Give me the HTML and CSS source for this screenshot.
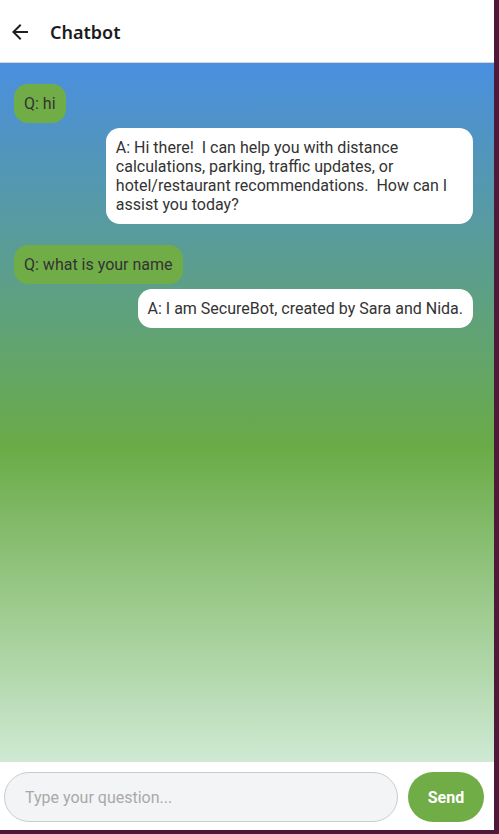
FILE: index.html
```html
<!DOCTYPE html>
<html>
<head>
<meta charset="utf-8">
<link rel="stylesheet" href="styles.css">
</head>
<body>
<div class="app">
  <header class="header">
    <svg class="back" width="24" height="24" viewBox="0 0 24 24"><path d="M20 11H7.83l5.59-5.59L12 4l-8 8 8 8 1.41-1.41L7.83 13H20v-2z" fill="#1f1f1f"/></svg>
    <h1 class="title">Chatbot</h1>
  </header>
  <main class="chat">
    <div class="msg q">Q: hi</div>
    <div class="msg a">A: Hi there!  I can help you with distance calculations, parking, traffic updates, or hotel/restaurant recommendations.  How can I assist you today?</div>
    <div class="msg q">Q: what is your name</div>
    <div class="msg a">A: I am SecureBot, created by Sara and Nida.</div>
  </main>
  <footer class="composer">
    <input class="input" type="text" placeholder="Type your question...">
    <button class="send">Send</button>
  </footer>
</div>
</body>
</html>
```
FILE: styles.css
```css
* { box-sizing: border-box; }
html, body { margin: 0; padding: 0; }
body {
  background: #4e1a3a;
  width: 499px;
  height: 834px;
  overflow: hidden;
  font-family: Roboto, "Liberation Sans", sans-serif;
}
.app {
  width: 494px;
  height: 830px;
  display: flex;
  flex-direction: column;
  background: #fff;
}
.header {
  height: 63px;
  flex: none;
  display: flex;
  align-items: center;
  gap: 18px;
  padding: 1px 0 0 8px;
  background: #fff;
  border-bottom: 1px solid #d6d6d6;
}
.back { display: block; }
.title {
  margin: 0;
  font-family: "Noto Sans", sans-serif;
  font-weight: 600;
  font-size: 18px;
  color: #1c1c1c;
}
.chat {
  flex: 1;
  display: flex;
  flex-direction: column;
  align-items: flex-start;
  padding: 21px 21px 16px 14px;
  background: linear-gradient(180deg, #4a8fe0 0%, #6aab47 55%, #cfe9d3 100%);
}
.msg {
  max-width: 80%;
  padding: 10px;
  border-radius: 14px;
  font-size: 16px;
  line-height: 19px;
  color: #333;
  white-space: pre-wrap;
}
.q {
  background: #70ad47;
  margin-bottom: 5px;
}
.a {
  background: #fff;
  align-self: flex-end;
  margin-bottom: 21px;
}
.composer {
  flex: none;
  height: 68px;
  display: flex;
  align-items: flex-start;
  gap: 10px;
  padding: 10px 10px 0 4px;
  background: #fff;
}
.input {
  flex: 1;
  height: 50px;
  border: 1px solid #cbcbcb;
  border-radius: 25px;
  background: #f3f4f6;
  padding: 0 20px;
  font-family: Roboto, sans-serif;
  font-size: 16px;
  color: #333;
  outline: none;
}
.input::placeholder { color: #a9a9a9; }
.send {
  width: 76px;
  height: 50px;
  border: none;
  border-radius: 25px;
  background: #70ad47;
  color: #fff;
  font-family: Roboto, sans-serif;
  font-weight: 700;
  font-size: 16px;
}
```
